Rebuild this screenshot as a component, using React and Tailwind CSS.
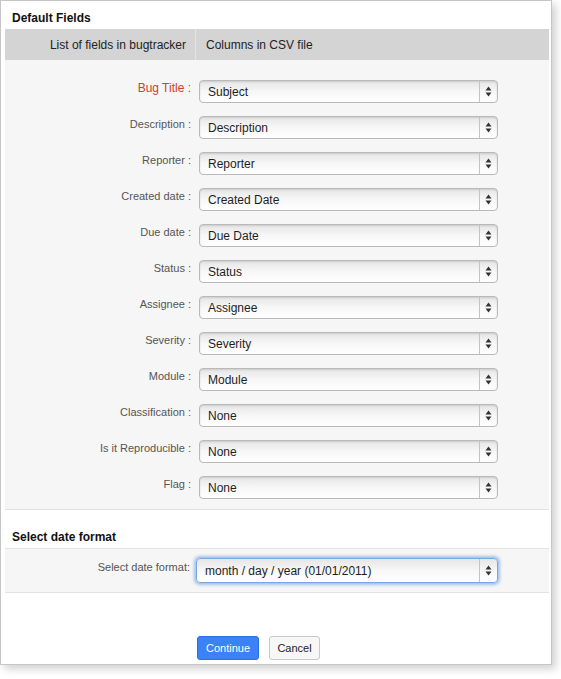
import React from 'react';

const fields = [
  ['Bug Title :', 'Subject', true],
  ['Description :', 'Description'],
  ['Reporter :', 'Reporter'],
  ['Created date :', 'Created Date'],
  ['Due date :', 'Due Date'],
  ['Status :', 'Status'],
  ['Assignee :', 'Assignee'],
  ['Severity :', 'Severity'],
  ['Module :', 'Module'],
  ['Classification :', 'None'],
  ['Is it Reproducible :', 'None'],
  ['Flag :', 'None'],
];

const Arrows = () => (
  <svg width="7" height="11" viewBox="0 0 7 11">
    <path d="M3.5 0.5 L6.5 4.5 L0.5 4.5 Z" fill="#333" />
    <path d="M3.5 10.5 L6.5 6.5 L0.5 6.5 Z" fill="#333" />
  </svg>
);

const FakeSelect = ({ value, focused }) => (
  <div
    className={
      'flex h-[23px] items-stretch rounded-[4px] border bg-gradient-to-b from-[#e6e6e6] via-[#f7f7f7] to-white text-[12px] text-[#1e1e1e] ' +
      (focused
        ? 'w-[302px] h-[25px] border-[#7aa7e0] shadow-[0_0_3px_2px_rgba(90,150,230,0.55)]'
        : 'w-[299px] border-[#b9b9b9] shadow-[inset_0_1px_2px_rgba(0,0,0,0.12)]')
    }
  >
    <div className="flex flex-1 items-center pl-[8px]">{value}</div>
    <div className="flex w-[18px] items-center justify-center border-l border-[#c4c4c4]">
      <Arrows />
    </div>
  </div>
);

export default function App() {
  return (
    <div
      className="h-[679px] w-[561px] bg-white"
      style={{ fontFamily: '"Liberation Sans", Arial, sans-serif' }}
    >
      <div className="flex h-[665px] w-[552px] flex-col border border-[#c6c6c6] bg-white pl-[4px] pr-[2px] shadow-[4px_4px_8px_rgba(0,0,0,0.18)]">
        <div className="h-[28px] pl-[7px] pt-[10px] text-[12px] font-bold leading-[14px] text-[#111]">
          Default Fields
        </div>
        <div className="flex h-[31px] bg-[#d4d4d4] text-[12px] text-[#222]">
          <div className="flex w-[190px] items-center justify-end pr-[9px]">
            List of fields in bugtracker
          </div>
          <div className="flex flex-1 items-center border-l border-[#e4e4e4] pl-[10px]">
            Columns in CSV file
          </div>
        </div>
        <div className="flex flex-col gap-[13px] border-b border-[#e2e2e2] bg-[#f6f6f6] pb-[10px] pt-[20px]">
          {fields.map(([label, value, req]) => (
            <div key={label} className="flex items-start">
              <div
                className={
                  'w-[186px] pt-[1px] text-right ' +
                  (req
                    ? 'text-[12px] leading-[14px] text-[#d2402a]'
                    : 'text-[11px] leading-[14px] text-[#555]')
                }
              >
                {label}
              </div>
              <div className="ml-[8px]">
                <FakeSelect value={value} />
              </div>
            </div>
          ))}
        </div>
        <div className="flex h-[38px] items-end pb-[2px] pl-[7px] text-[12px] font-bold text-[#111]">
          Select date format
        </div>
        <div className="flex h-[45px] items-center border-y border-[#e2e2e2] bg-[#f6f6f6]">
          <div className="w-[185px] self-start pt-[11px] text-right text-[11px] leading-[14px] text-[#555]">
            Select date format:
          </div>
          <div className="ml-[6px]">
            <FakeSelect value="month / day / year (01/01/2011)" focused />
          </div>
        </div>
        <div className="flex flex-1 items-start gap-[10px] pl-[192px] pt-[43px]">
          <button className="h-[24px] w-[62px] rounded-[3px] border border-[#2f6fe0] bg-[#3b82f6] text-[11px] text-white">
            Continue
          </button>
          <button className="h-[24px] w-[51px] rounded-[3px] border border-[#c8c8c8] bg-[#f7f7f7] text-[11px] text-[#222]">
            Cancel
          </button>
        </div>
      </div>
    </div>
  );
}
